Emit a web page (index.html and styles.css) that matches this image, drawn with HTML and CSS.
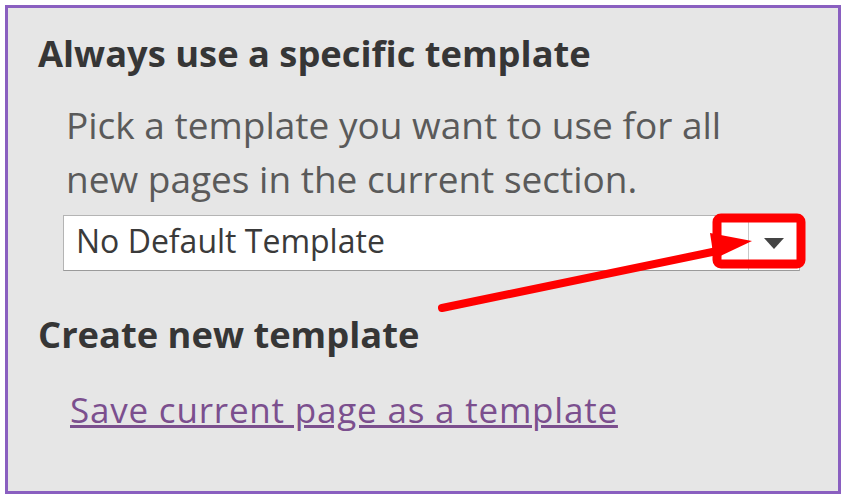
FILE: index.html
```html
<!DOCTYPE html>
<html>
<head>
<meta charset="utf-8">
<link rel="stylesheet" href="styles.css">
</head>
<body>
<div class="panel">
  <h2 class="heading">Always use a specific template</h2>
  <p class="desc">Pick a template you want to use for all new pages in the current section.</p>
  <div class="select">
    <span class="select-value">No Default Template</span>
    <span class="select-btn"><span class="caret"></span></span>
  </div>
  <h2 class="heading heading-create">Create new template</h2>
  <a class="link" href="#">Save current page as a template</a>
  <svg class="annot" width="851" height="501" viewBox="0 0 851 501">
    <rect x="717" y="218" width="84" height="46" rx="4" fill="none" stroke="#ff0000" stroke-width="9"/>
    <line x1="442" y1="308" x2="722" y2="250" stroke="#ff0000" stroke-width="8" stroke-linecap="round"/>
    <polygon points="710,233 752,241 714,259" fill="#ff0000"/>
  </svg>
</div>
</body>
</html>
```
FILE: styles.css
```css
html, body {
  margin: 0;
  padding: 0;
  background: #ffffff;
}
body {
  width: 851px;
  height: 501px;
  overflow: hidden;
}
.panel {
  position: relative;
  box-sizing: border-box;
  margin: 5px 0 0 5px;
  width: 836px;
  height: 489px;
  border: 3px solid #8a5fc0;
  background: #e6e6e6;
  padding: 23px 30px 0 30px;
  font-family: "Open Sans", "DejaVu Sans", sans-serif;
}
.heading {
  margin: 0;
  font-size: 36.3px;
  font-weight: 700;
  line-height: 44px;
  color: #363636;
}
.desc {
  margin: 23px 0 0 28px;
  width: 690px;
  font-size: 37px;
  line-height: 54px;
  color: #5a5a5a;
}
.select {
  display: flex;
  margin: 9px 0 0 25px;
  width: 737px;
  height: 56px;
  box-sizing: border-box;
  border: 1px solid #b4b4b4;
  border-bottom-color: #9a9a9a;
  background: #ffffff;
}
.select-value {
  flex: 1;
  padding-left: 12px;
  font-size: 32px;
  line-height: 50px;
  color: #3a3a3a;
}
.select-btn {
  display: flex;
  align-items: center;
  justify-content: center;
  width: 50px;
  border-left: 1px solid #c8c8c8;
}
.caret {
  width: 0;
  height: 0;
  border-left: 10px solid transparent;
  border-right: 10px solid transparent;
  border-top: 11px solid #444444;
}
.heading-create {
  margin-top: 41px;
}
.link {
  display: inline-block;
  margin: 32px 0 0 32px;
  font-size: 35px;
  letter-spacing: 0.8px;
  line-height: 44px;
  color: #7b4f8e;
  text-decoration: underline;
}
.annot {
  position: absolute;
  left: -8px;
  top: -8px;
  pointer-events: none;
}
```
